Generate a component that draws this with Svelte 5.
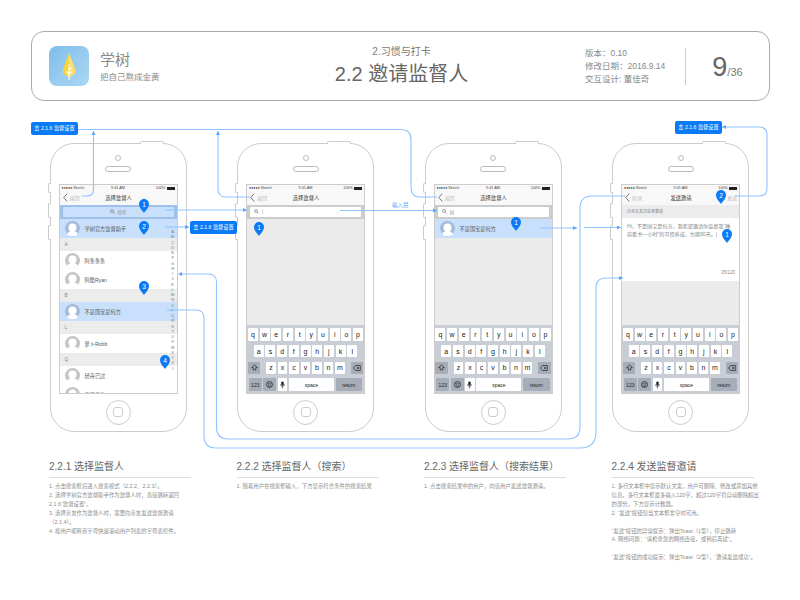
<script>
  const alphabet = 'ABCDEFGHIJKLMNOPQRSTUVWXYZ#'.split('')
  const keyRows = ['qwertyuiop', 'asdfghjkl', 'zxcvbnm']

  const pins = [
    { x: 144, y: 199, n: 1 },
    { x: 144, y: 221, n: 2 },
    { x: 144, y: 281, n: 3 },
    { x: 165, y: 355, n: 4 },
    { x: 259, y: 222, n: 1 },
    { x: 516, y: 217, n: 1 },
    { x: 721, y: 190, n: 2 },
    { x: 727, y: 229, n: 1 }
  ]

  const labels = [
    { x: 31, y: 122 },
    { x: 190, y: 221 },
    { x: 675, y: 121 }
  ]

  const notes = [
    {
      title: '2.2.1 选择监督人',
      body: '1. 点击搜索框后进入搜索模式（2.2.2、2.2.3）。\n2. 选择学树官方监督助手作为监督人时，直接跳转返回2.1.6“监督设置”。\n3. 选择亲友作为监督人时，需要向亲友发送监督邀请（2.1.4）。\n4. 按用户昵称首字母快速滚动用户列表的字母表控件。'
    },
    {
      title: '2.2.2 选择监督人（搜索）',
      body: '1. 随着用户在搜索框输入，下方显示符合条件的搜索结果'
    },
    {
      title: '2.2.3 选择监督人（搜索结果）',
      body: '1. 点击搜索结果中的用户，向该用户发送监督邀请。'
    },
    {
      title: '2.2.4 发送监督邀请',
      body: '1. 多行文本框中显示默认文案，用户可删除、修改或添加其他信息。多行文本框最多输入120字，超过120字符自动删除超出的部分。下方显示计数器。\n2. “发送”按钮仅当文本框非空时可用。\n\n“发送”按钮的异常提示：弹出Toast（1型），停止跳转\nA. 网络问题：“请检查您的网络连接，或稍后再试”。\n\n“发送”按钮的成功提示：弹出Toast（2型），“邀请发送成功”。'
    }
  ]
</script>

{#snippet hardware()}
  <i class="btn power"></i>
  <i class="btn mute"></i>
  <i class="btn up"></i>
  <i class="btn down"></i>
  <div class="camera"></div>
  <div class="speaker"></div>
{/snippet}

{#snippet nav(left, title, right)}
  <div class="status">
    <span class="carrier">●●●●● Sketch</span>
    <span class="time">9:41 AM</span>
    <span class="battery">100% <i></i></span>
  </div>
  <div class="nav">
    <span class="back">
      <svg width="5" height="9" viewBox="0 0 5 9"><path d="M4.300.6.700 4.500l3.600 3.900" fill="none" stroke="#777" stroke-width="1"/></svg>
      {left}
    </span>
    <span class="title">{title}</span>
    <span class="right">{right}</span>
  </div>
{/snippet}

{#snippet search(blue, text)}
  <div class="search" class:blue>
    <div class="input" class:centered={blue}>
      <svg width="5" height="5" viewBox="0 0 6 6"><circle cx="2.400" cy="2.400" r="1.800" fill="none" stroke="#777" stroke-width=".8"/><path d="M3.800 3.800 5.600 5.600" stroke="#777" stroke-width=".8"/></svg>
      <span>{text}</span>
    </div>
  </div>
{/snippet}

{#snippet avatar()}
  <svg class="avatar" width="15" height="15" viewBox="0 0 30 30">
    <circle cx="15" cy="15" r="15" fill="currentColor"/>
    <circle cx="15" cy="13" r="8" fill="#fff"/>
    <path d="M4 26c3-5 7-6 11-6s8 1 11 6a15 15 0 0 1-22 0z" fill="#fff"/>
  </svg>
{/snippet}

{#snippet row(name, active)}
  <div class="row" class:active>
    {@render avatar()}
    <span>{name}</span>
  </div>
{/snippet}

{#snippet keyboard()}
  <div class="keyboard">
    {#each keyRows as keys, index}
      <div class="keys">
        {#if index === 2}
          <b class="key dark wide">
            <svg width="7" height="7" viewBox="0 0 8 8"><path d="M4 .8.800 4.200h1.800v2.600h2.800V4.200h1.800z" fill="none" stroke="#222" stroke-width=".8"/></svg>
          </b>
          <span class="shim"></span>
        {/if}
        {#each keys as key}
          <b class="key">{key}</b>
        {/each}
        {#if index === 2}
          <span class="shim"></span>
          <b class="key dark wide">
            <svg width="8" height="6" viewBox="0 0 9 7"><path d="M2.800.6h5.600v5.800H2.800L.5 3.500z" fill="none" stroke="#222" stroke-width=".8"/><path d="M4.500 2.200 6.800 4.800M6.800 2.200 4.500 4.800" stroke="#222" stroke-width=".7"/></svg>
          </b>
        {/if}
      </div>
    {/each}
    <div class="keys">
      <b class="key dark wide num">123</b>
      <b class="key dark wide">
        <svg width="7" height="7" viewBox="0 0 8 8"><circle cx="4" cy="4" r="3.400" fill="none" stroke="#222" stroke-width=".9"/><path d="M1.800 3.300h4.400M2.300 5.100c1 1 2.400 1 3.400 0" fill="none" stroke="#222" stroke-width=".8"/></svg>
      </b>
      <b class="key mic">
        <svg width="5" height="8" viewBox="0 0 5 8"><rect x="1.300" y=".4" width="2.400" height="4.400" rx="1.200" fill="#222"/><path d="M.5 3.500c0 2.700 4 2.700 4 0M2.500 5.500v2" fill="none" stroke="#222" stroke-width=".6"/></svg>
      </b>
      <b class="key space">space</b>
      <b class="key dark return">return</b>
    </div>
  </div>
{/snippet}

<div class="board">
  <header class="head">
    <div class="brand">
      <svg class="logo" width="40" height="40" viewBox="0 0 40 40">
        <defs>
          <linearGradient id="sky" x1="0" y1="0" x2="1" y2="1">
            <stop offset="0" stop-color="#80bde9"/>
            <stop offset=".6" stop-color="#9bcdf0"/>
            <stop offset="1" stop-color="#a9d6f3"/>
          </linearGradient>
        </defs>
        <rect width="40" height="40" rx="8" fill="url(#sky)"/>
        <path d="M20 7c1.500 6 6.300 14 6.300 18.500 0 2.500-3.800 4.500-6.300 5.500-2.500-1-6.300-3-6.300-5.500C13.700 21 18.500 13 20 7z" fill="#f8d440"/>
        <path d="M20 7c1.500 6 6.300 14 6.300 18.500 0 2.500-3.800 4.500-6.300 5.500z" fill="#fbdf6c"/>
        <path d="M20 18v16M20 24l2.500-2.500M20 28l-2.500-2.500M20 28l2.500-2.500" fill="none" stroke="#fff" stroke-width="1.100"/>
      </svg>
      <div>
        <div class="app">学树</div>
        <div class="slogan">把自己熬成金黄</div>
      </div>
    </div>
    <div class="center">
      <div class="chapter">2.习惯与打卡</div>
      <div class="page-title">2.2 邀请监督人</div>
    </div>
    <div class="meta">
      <div>版本：0.10</div>
      <div>修改日期：2016.9.14</div>
      <div>交互设计: 董佳奇</div>
    </div>
    <div class="count"><strong>9</strong>/36</div>
  </header>

  <div class="phones">
    <section class="phone">
      {@render hardware()}
      <div class="screen">
        {@render nav('返回', '选择监督人', '')}
        {@render search(true, '搜索')}
        {@render row('学树官方监督助手', true)}
        <div class="section">A</div>
        {@render row('阿条条条', false)}
        {@render row('阿酷Ryan', false)}
        <div class="section">B</div>
        {@render row('不是国宝是何方', true)}
        <div class="section">L</div>
        {@render row('萝卜Robb', false)}
        <div class="section">Q</div>
        {@render row('轻舟已过', false)}
        {@render row('素颜雪片', false)}
        <div class="index">
          {#each alphabet as letter}<span>{letter}</span>{/each}
        </div>
      </div>
      <div class="home"><i></i></div>
    </section>

    <section class="phone">
      {@render hardware()}
      <div class="screen">
        {@render nav('返回', '选择监督人', '')}
        {@render search(false, '|')}
        <div class="fill"></div>
        {@render keyboard()}
      </div>
      <div class="home"><i></i></div>
    </section>

    <section class="phone">
      {@render hardware()}
      <div class="screen">
        {@render nav('返回', '选择监督人', '')}
        {@render search(false, '国')}
        {@render row('不是国宝是何方', true)}
        <div class="fill"></div>
        {@render keyboard()}
      </div>
      <div class="home"><i></i></div>
    </section>

    <section class="phone">
      {@render hardware()}
      <div class="screen">
        {@render nav('取消', '发送邀请', '发送')}
        <div class="hint">向亲友发送监督邀请</div>
        <div class="compose">
          <p>Hi，不是国宝是何方，我希望邀请你监督我“睡前看书一小时”的习惯养成，为期30天。|</p>
          <small>35/120</small>
        </div>
        <div class="fill"></div>
        {@render keyboard()}
      </div>
      <div class="home"><i></i></div>
    </section>
  </div>

  <div class="notes">
    {#each notes as note}
      <article>
        <h3>{note.title}</h3>
        <p>{note.body}</p>
      </article>
    {/each}
  </div>

  <svg class="wires" width="800" height="600" viewBox="0 0 800 600">
    <defs>
      <marker id="tip" markerUnits="userSpaceOnUse" markerWidth="5" markerHeight="5" refX="4" refY="2.500" orient="auto">
        <path d="M0 .5 4 2.500 0 4.500z" fill="#5aa5ff"/>
      </marker>
    </defs>
    <g fill="none" stroke="#8fc3ff" stroke-width="1.100">
      <path d="M78 129.500H401Q411 129.500 411 139.500V188Q411 197 420 197H437"/>
      <path d="M82 196H87Q93.500 196 93.500 190V131" marker-end="url(#tip)"/>
      <path d="M250 197H226Q218 197 218 189V131" marker-end="url(#tip)"/>
      <path d="M165 210H247" marker-end="url(#tip)"/>
      <path d="M340 210.500H437" marker-end="url(#tip)"/>
      <path d="M165 227H189" marker-end="url(#tip)"/>
      <path d="M180 274H208Q216.500 274 216.500 282V427Q216.500 439 228 439H568Q580 439 580 427V208Q580 196 592 196H625"/>
      <path d="M167 310H196Q204 310 204 318V436Q204 448 216 448H580Q596 448 596 432V288Q596 278 606 278H623" marker-end="url(#tip)"/>
      <path d="M540 228H577" marker-end="url(#tip)"/>
      <path d="M584 227.500H621" marker-end="url(#tip)"/>
      <path d="M735 196H759Q767 196 767 188V135Q767 127 759 127H722" marker-end="url(#tip)"/>
    </g>
    <path d="M178 274l4-2v4z" fill="#5aa5ff"/>
  </svg>
  <span class="after">输入后</span>

  {#each labels as label}
    <div class="label" style="left:{label.x}px;top:{label.y}px">去 2.1.6 监督设置</div>
  {/each}

  {#each pins as pin}
    <div class="pin" style="left:{pin.x - 5}px;top:{pin.y}px">
      <svg width="10" height="14" viewBox="0 0 10 14"><path d="M5 0a5 5 0 0 1 5 5c0 3.500-3.300 6.500-5 9-1.700-2.500-5-5.500-5-9a5 5 0 0 1 5-5z" fill="#0a7bf5"/></svg>
      <span>{pin.n}</span>
    </div>
  {/each}
</div>

<style>
  :global(body) {
    background: #fff;
  }

  .board {
    position: relative;
    width: 800px;
    height: 600px;
    overflow: hidden;
    font-family: "Liberation Sans", "Noto Sans CJK SC", sans-serif;
    color: #888;
  }

  .head {
    box-sizing: border-box;
    display: flex;
    align-items: center;
    width: 739px;
    height: 70px;
    margin: 31px 0 0 31px;
    padding-left: 17px;
    border: 1px solid #aaa;
    border-radius: 13px;
  }

  .brand {
    display: flex;
    align-items: center;
    gap: 11px;
    width: 260px;
  }

  .logo {
    flex: none;
    display: block;
  }

  .app {
    font-size: 15px;
    line-height: 20px;
    color: #8a8a8a;
  }

  .slogan {
    margin-top: 1px;
    font-size: 8.500px;
    line-height: 12px;
  }

  .center {
    width: 195px;
    margin-left: -5px;
    text-align: center;
  }

  .chapter {
    font-size: 10px;
    line-height: 14px;
    color: #777;
  }

  .page-title {
    margin-top: 2px;
    font-size: 20px;
    line-height: 26px;
    font-weight: 400;
    color: #666;
  }

  .meta {
    width: 100px;
    margin-left: 86px;
    padding-top: 1px;
    font-size: 8.500px;
    line-height: 12.800px;
    color: #888;
  }

  .count {
    display: flex;
    align-items: baseline;
    justify-content: center;
    height: 37px;
    width: 83px;
    line-height: 39px;
    border-left: 1px solid #ccc;
    font-size: 11px;
    color: #777;
  }

  .count strong {
    font-size: 27px;
    font-weight: 400;
    color: #666;
  }

  .phones {
    display: flex;
    gap: 50.500px;
    margin: 42px 0 0 49.500px;
  }

  .phone {
    position: relative;
    box-sizing: border-box;
    display: flex;
    flex-direction: column;
    align-items: center;
    width: 137px;
    height: 289px;
    border: 1px solid #ccc;
    border-radius: 24px;
  }

  .btn {
    position: absolute;
    box-sizing: border-box;
    border: 1px solid #ccc;
    background: #fff;
  }

  .btn.power {
    left: 89px;
    top: -3px;
    width: 24px;
    height: 3px;
    border-bottom: 0;
    border-radius: 2px 2px 0 0;
  }

  .btn.mute,
  .btn.up,
  .btn.down {
    left: -3px;
    width: 3px;
    border-right: 0;
    border-radius: 2px 0 0 2px;
  }

  .btn.mute {
    top: 39px;
    height: 10px;
  }

  .btn.up {
    top: 59px;
    height: 15px;
  }

  .btn.down {
    top: 81px;
    height: 15px;
  }

  .camera {
    width: 4px;
    height: 4px;
    margin-top: 10.500px;
    border: 1px solid #bbb;
    border-radius: 50%;
  }

  .speaker {
    box-sizing: border-box;
    width: 26px;
    height: 6px;
    margin-top: 5px;
    border: 1px solid #bbb;
    border-radius: 3px;
  }

  .screen {
    position: relative;
    box-sizing: border-box;
    display: flex;
    flex-direction: column;
    flex: none;
    width: 119px;
    height: 210px;
    margin-top: 12.500px;
    overflow: hidden;
    border: 1px solid #ccc;
    background: #fff;
    color: #333;
  }

  .status {
    display: grid;
    grid-template-columns: 1fr auto 1fr;
    align-items: center;
    flex: none;
    height: 6px;
    padding: 0 2px;
    background: #f8f8f8;
    font-size: 3.800px;
    color: #444;
  }

  .carrier {
    white-space: nowrap;
    font-size: 3.600px;
  }

  .battery {
    display: flex;
    align-items: center;
    justify-content: flex-end;
    gap: 1px;
  }

  .battery i {
    width: 8px;
    height: 3px;
    background: #222;
  }

  .nav {
    display: grid;
    grid-template-columns: 1fr auto 1fr;
    align-items: center;
    flex: none;
    height: 13.500px;
    padding: 0 2px 0 3px;
    background: #f8f8f8;
    font-size: 5.300px;
  }

  .back {
    display: flex;
    align-items: center;
    gap: 2px;
    font-size: 5px;
    color: #bbb;
  }

  .right {
    text-align: right;
    font-size: 5px;
    color: #bbb;
  }

  .title {
    color: #333;
  }

  .search {
    flex: none;
    box-sizing: border-box;
    height: 14.500px;
    padding: 2.300px 3px;
    background: #ccc;
  }

  .search.blue {
    background: #9fc0e8;
  }

  .input {
    display: flex;
    align-items: center;
    gap: 3px;
    height: 10px;
    padding-left: 4px;
    border-radius: 1px;
    background: #fff;
    font-size: 4.500px;
    color: #999;
  }

  .input.centered {
    justify-content: center;
    padding-left: 0;
    background: #c8e0fb;
  }

  .row {
    flex: none;
    display: flex;
    align-items: center;
    gap: 5px;
    height: 19px;
    padding-left: 5px;
    font-size: 5.200px;
    color: #555;
  }

  .row.active {
    background: #c8e0fb;
  }

  .avatar {
    flex: none;
    display: block;
    color: #c3c5c9;
  }

  .row.active .avatar {
    color: #a5bcd8;
  }

  .section {
    flex: none;
    height: 13px;
    padding-left: 5px;
    background: #ececec;
    font-size: 4.800px;
    line-height: 14px;
    color: #888;
  }

  .index {
    position: absolute;
    top: 44px;
    right: 2px;
    display: flex;
    flex-direction: column;
    align-items: center;
    font-size: 4px;
    line-height: 5.250px;
    color: #777;
  }

  .fill {
    flex: 1;
    background: #ebebeb;
  }

  .keyboard {
    flex: none;
    display: flex;
    flex-direction: column;
    gap: 4.300px;
    box-sizing: border-box;
    height: 68px;
    padding: 3px 1px 0;
    background: #c9ced6;
  }

  .keys {
    display: flex;
    justify-content: center;
    gap: 1.700px;
  }

  .key {
    display: flex;
    align-items: center;
    justify-content: center;
    width: 10px;
    height: 12.500px;
    border-radius: 1px;
    background: #fff;
    font-size: 7px;
    font-weight: 400;
    color: #222;
  }

  .key.dark {
    background: #a6adb8;
  }

  .key.wide {
    width: 12.700px;
  }

  .shim {
    width: 2.500px;
  }

  .key.num {
    font-size: 5px;
  }

  .key.mic {
    width: 9.500px;
    background: #fff;
  }

  .key.space {
    width: 45px;
    font-size: 5px;
  }

  .key.return {
    width: 26.500px;
    font-size: 5px;
  }

  .hint {
    flex: none;
    height: 13px;
    padding-left: 5px;
    background: #ececec;
    font-size: 4px;
    line-height: 13px;
    color: #888;
  }

  .compose {
    position: relative;
    flex: none;
    height: 63px;
    box-sizing: border-box;
    padding: 4px 4px 0 5px;
    background: #fff;
  }

  .compose p {
    margin: 0;
    font-size: 5.100px;
    line-height: 8.500px;
    color: #888;
  }

  .compose small {
    position: absolute;
    right: 4px;
    bottom: 6px;
    font-size: 4.500px;
    color: #888;
  }

  .home {
    display: flex;
    align-items: center;
    justify-content: center;
    width: 23px;
    height: 23px;
    margin-top: 5.500px;
    border: 1px solid #ccc;
    border-radius: 50%;
  }

  .home i {
    box-sizing: border-box;
    width: 10px;
    height: 10px;
    border: 1px solid #ccc;
    border-radius: 3px;
  }

  .notes {
    display: grid;
    grid-template-columns: repeat(4, 187.500px);
    margin: 29px 0 0 49px;
  }

  .notes article {
    width: 142px;
  }

  .notes h3 {
    margin: 0;
    padding-bottom: 5px;
    border-bottom: 1px solid #ddd;
    font-size: 10px;
    line-height: 11px;
    font-weight: 400;
    color: #666;
  }

  .notes p {
    margin: 4px 0 0;
    white-space: pre-wrap;
    font-size: 5.400px;
    line-height: 8.900px;
    color: #8c8c8c;
  }

  .notes article:last-child p {
    width: 148px;
  }

  .wires {
    position: absolute;
    left: 0;
    top: 0;
    pointer-events: none;
  }

  .after {
    position: absolute;
    left: 392px;
    top: 201px;
    font-size: 5.500px;
    line-height: 8px;
    color: #5aa2ff;
  }

  .label {
    position: absolute;
    box-sizing: border-box;
    width: 47px;
    height: 13px;
    border-radius: 2px;
    background: #0a7bf5;
    font-size: 5.200px;
    line-height: 13px;
    text-align: center;
    white-space: nowrap;
    color: #fff;
  }

  .pin {
    position: absolute;
    width: 10px;
    height: 14px;
  }

  .pin svg {
    display: block;
  }

  .pin span {
    position: absolute;
    left: 0;
    top: 1.500px;
    width: 10px;
    font-size: 6.500px;
    line-height: 7px;
    text-align: center;
    color: #fff;
  }
</style>
